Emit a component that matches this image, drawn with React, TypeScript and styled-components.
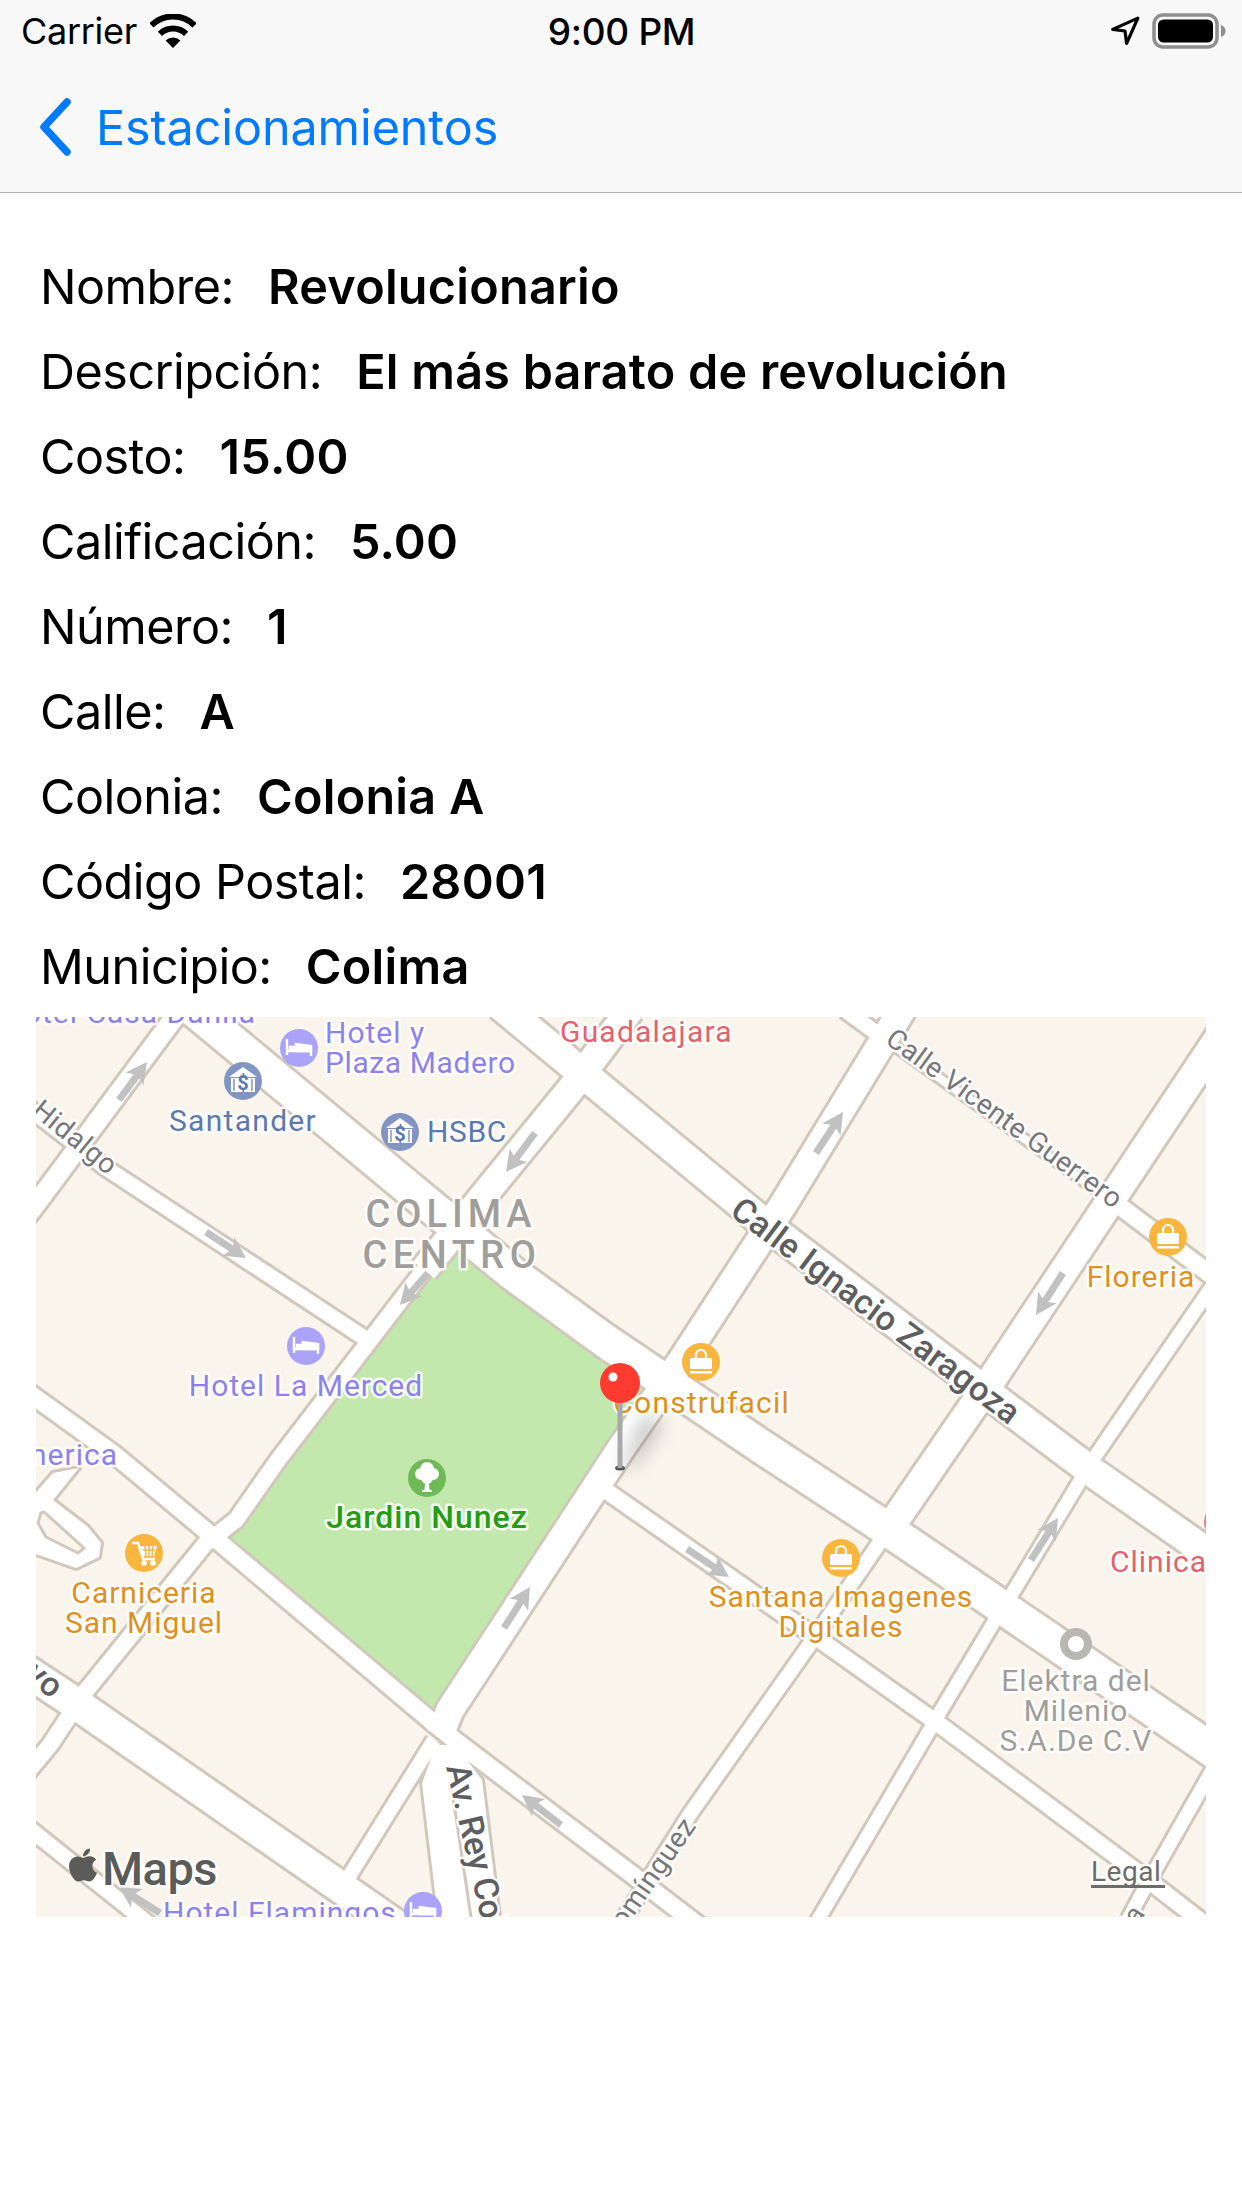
import * as React from 'react'
import styled, { createGlobalStyle } from 'styled-components'
import { FaApple } from 'react-icons/fa'

const GlobalStyle = createGlobalStyle`
  html, body {
    margin: 0;
    padding: 0;
    background: #ffffff;
    font-family: Inter, "Noto Sans", sans-serif;
  }
`

const Page = styled.div`
  width: 1242px;
  height: 2208px;
  background: #ffffff;
  overflow: hidden;
`

const Header = styled.header`
  background: #f8f8f8;
  border-bottom: 1px solid #b1b1b1;
  height: 192px;
`

const StatusBar = styled.div`
  height: 62px;
  display: grid;
  grid-template-columns: 1fr auto 1fr;
  align-items: center;
  padding: 0 16px 0 21px;
  font-size: 36px;
  color: #000000;
  letter-spacing: -0.3px;
`

const StatusLeft = styled.div`
  display: flex;
  align-items: center;
  gap: 13px;
`

const StatusRight = styled.div`
  display: flex;
  justify-content: flex-end;
  align-items: center;
  gap: 12px;
`

const Time = styled.span`
  font-weight: 500;
  font-size: 37px;
  margin-right: 4px;
`

const NavBar = styled.nav`
  height: 130px;
  display: flex;
  align-items: center;
  padding-left: 40px;
  gap: 25px;
  box-sizing: border-box;
  color: #007aff;
  font-size: 48.5px;
  letter-spacing: -0.1px;
`

const Details = styled.section`
  padding: 51px 36px 0;
`

const Row = styled.div`
  height: 85px;
  display: flex;
  align-items: center;
  gap: 34px;
  padding-left: 4px;
  font-size: 48.5px;
  letter-spacing: -0.5px;
  color: #000000;
`

const Value = styled.span`
  font-weight: 600;
  letter-spacing: 0.25px;
`

const MapFrame = styled.div`
  margin: 8px 36px 0;
  height: 900px;
  overflow: hidden;

  svg {
    display: block;
  }
`

const MapText = styled.text<{ $color: string; $size: number; $weight?: number; $spacing?: number }>`
  font-family: Roboto, Inter, sans-serif;
  font-size: ${(p) => p.$size}px;
  font-weight: ${(p) => p.$weight ?? 400};
  letter-spacing: ${(p) => p.$spacing ?? 1}px;
  fill: ${(p) => p.$color};
  stroke: rgba(255, 255, 255, 0.85);
  stroke-width: 5px;
  stroke-linejoin: round;
  paint-order: stroke;
`

const BARE = '#f9f5ed'
const EDGE = '#d0c8bb'
const PURPLE = '#8d82ea'
const BANK = '#5d78ae'
const ORANGE = '#dc9120'
const RED = '#e0636f'
const GREY = '#a09e9a'
const STREET = '#77777a'
const STREET_BOLD = '#5e5e60'

const roads = [
  { w: 29, d: '500,1005 765,1224 990,1395 1095,1474 1215,1558' },
  { w: 33, d: '188,1005 423,1200 512,1273 604,1340 765,1449 884,1527 1215,1752' },
  { w: 15, d: '25,1105 106,1168 375,1345' },
  { w: 27, d: '905,1005 783,1205 680,1363 620,1450 450,1710 440,1735' },
  { w: 17, d: '25,1390 115,1455 205,1530 430,1720 457,1742 630,1873 715,1938' },
  { w: 31, d: '25,1670 78,1705 346,1891 395,1925' },
  { w: 15, d: '25,1825 150,1925' },
  { w: 15, d: '845,1010 886,1040' },
  { w: 8, d: '886,1040 1110,1200' },
  { w: 17, d: '1105,1195 1215,1278' },
  { w: 28, d: '1220,1036 994,1376 943,1450 880,1542' },
  { w: 14, d: '880,1542 810,1644 690,1814 620,1925' },
  { w: 13, d: '1215,1282 1096,1455 1080,1481 1010,1597 994,1622 940,1712 932,1726 815,1925' },
  { w: 13, d: '1215,1765 1141,1895 1125,1925' },
  { w: 16, d: '605,1490 827,1645 940,1725 1148,1880 1215,1932' },
  { w: 19, d: '180,1010 36,1204 25,1218' },
  { w: 27, d: '630,1010 570,1090 484,1195 424,1270' },
  { w: 16, d: '424,1270 278,1460 236,1520 205,1544 85,1692 50,1745 25,1775' },
  { w: 14, d: '434,1740 348,1878 335,1900' },
]

const wideAreas = [
  '436,1745 422,1783 439,1925 500,1925 482,1780 456,1745',
  '79,1468 53,1473 25,1505 25,1550 76,1568 99,1557 101,1543 88,1527 53,1500',
]

const arrows = [
  [119, 1100, 147, 1062],
  [206, 1232, 246, 1258],
  [535, 1133, 506, 1172],
  [428, 1273, 400, 1305],
  [816, 1153, 843, 1112],
  [1063, 1273, 1036, 1315],
  [504, 1628, 530, 1587],
  [561, 1825, 522, 1795],
  [160, 1913, 119, 1887],
  [687, 1549, 729, 1577],
  [1031, 1560, 1058, 1518],
]

type Kind = 'bed' | 'bank' | 'bag' | 'cart' | 'tree'

const pois: { x: number; y: number; kind: Kind }[] = [
  { x: 299, y: 1048, kind: 'bed' },
  { x: 243, y: 1081, kind: 'bank' },
  { x: 400, y: 1132, kind: 'bank' },
  { x: 306, y: 1346, kind: 'bed' },
  { x: 701, y: 1362, kind: 'bag' },
  { x: 1168, y: 1237, kind: 'bag' },
  { x: 427, y: 1478, kind: 'tree' },
  { x: 144, y: 1553, kind: 'cart' },
  { x: 841, y: 1558, kind: 'bag' },
  { x: 423, y: 1911, kind: 'bed' },
]

const poiFill: Record<Kind, string> = {
  bed: '#aaa3f7',
  bank: '#8295c2',
  bag: '#f8b63f',
  cart: '#f8b63f',
  tree: '#6fb956',
}

type Label = {
  t: string
  x: number
  y: number
  c: string
  s?: number
  a?: 'start' | 'middle' | 'end'
  w?: number
  ls?: number
  r?: number
}

const labels: Label[] = [
  { t: 'Hotel Casa Dahlia', x: 256, y: 1023, c: PURPLE, a: 'end' },
  { t: 'Hotel y', x: 325, y: 1043, c: PURPLE },
  { t: 'Plaza Madero', x: 325, y: 1073, c: PURPLE, ls: 0.6 },
  { t: 'Santander', x: 243, y: 1131, c: BANK, a: 'middle', ls: 1.3 },
  { t: 'HSBC', x: 427, y: 1142, c: BANK, ls: 0.6 },
  { t: 'Guadalajara', x: 560, y: 1042, c: RED, ls: 1.2 },
  { t: 'COLIMA', x: 451, y: 1227, c: GREY, a: 'middle', s: 38, ls: 5, w: 500 },
  { t: 'CENTRO', x: 452, y: 1268, c: GREY, a: 'middle', s: 38, ls: 5.5, w: 500 },
  { t: 'Hotel La Merced', x: 306, y: 1396, c: PURPLE, a: 'middle' },
  { t: 'Construfacil', x: 790, y: 1413, c: ORANGE, a: 'end', ls: 1.2 },
  { t: 'Floreria', x: 1141, y: 1287, c: ORANGE, a: 'middle' },
  { t: 'Clinica', x: 1110, y: 1572, c: RED },
  { t: 'Jardin Nunez', x: 427, y: 1528, c: '#259c12', a: 'middle', s: 32, w: 500 },
  { t: 'Carniceria', x: 144, y: 1603, c: ORANGE, a: 'middle' },
  { t: 'San Miguel', x: 144, y: 1633, c: ORANGE, a: 'middle' },
  { t: 'America', x: 118, y: 1465, c: PURPLE, a: 'end' },
  { t: 'Santana Imagenes', x: 841, y: 1607, c: ORANGE, a: 'middle' },
  { t: 'Digitales', x: 841, y: 1637, c: ORANGE, a: 'middle' },
  { t: 'Elektra del', x: 1076, y: 1691, c: GREY, a: 'middle' },
  { t: 'Milenio', x: 1076, y: 1721, c: GREY, a: 'middle' },
  { t: 'S.A.De C.V', x: 1076, y: 1751, c: GREY, a: 'middle' },
  { t: 'Hotel Flamingos', x: 163, y: 1923, c: PURPLE },
  { t: 'Hidalgo', x: 108, y: 1176, c: STREET, a: 'end', s: 28, ls: 0.5, r: 39 },
  { t: 'Calle Vicente Guerrero', x: 999, y: 1126, c: STREET, a: 'middle', s: 28, ls: 0.3, r: 36 },
  { t: 'Calle Ignacio Zaragoza', x: 869, y: 1320, c: STREET_BOLD, a: 'middle', s: 34, w: 500, ls: 0.2, r: 37 },
  { t: 'Av. Rey Colima', x: 446, y: 1767, c: STREET_BOLD, s: 34, w: 500, ls: -0.3, r: 77 },
  { t: 'Domínguez', x: 697, y: 1826, c: STREET, a: 'end', s: 28, ls: 0.5, r: -55 },
  { t: 'Nuevo', x: 52, y: 1700, c: STREET_BOLD, a: 'end', s: 34, w: 500, ls: 0.5, r: 39 },
  { t: 'Rueda', x: 1146, y: 1913, c: STREET, a: 'end', s: 28, ls: 0.5, r: -57 },
]

const rows = [
  ['Nombre:', 'Revolucionario'],
  ['Descripción:', 'El más barato de revolución'],
  ['Costo:', '15.00'],
  ['Calificación:', '5.00'],
  ['Número:', '1'],
  ['Calle:', 'A'],
  ['Colonia:', 'Colonia A'],
  ['Código Postal:', '28001'],
  ['Municipio:', 'Colima'],
]

const WifiIcon = () => (
  <svg width="46" height="34" viewBox="0 0 46 34">
    <path d="M1.4 11.4a30.5 30.5 0 0 1 43.2 0" fill="none" stroke="#000" strokeWidth="6" />
    <path d="M9.9 19.9a18.5 18.5 0 0 1 26.2 0" fill="none" stroke="#000" strokeWidth="6" />
    <path d="M23 34l-7.4-7.4a10.5 10.5 0 0 1 14.8 0z" fill="#000" />
  </svg>
)

const LocationIcon = () => (
  <svg width="30" height="30" viewBox="0 0 28 28">
    <path d="M26 2 2.5 12.5l11.5 1.500 1.500 11.500z" fill="none" stroke="#000" strokeWidth="3" strokeLinejoin="round" />
  </svg>
)

const BatteryIcon = () => (
  <svg width="74" height="36" viewBox="0 0 74 36">
    <rect x="2" y="2" width="63" height="32" rx="9" fill="none" stroke="#8e8e8e" strokeWidth="3.500" />
    <rect x="6" y="6.500" width="55" height="23" rx="5.500" fill="#000" />
    <path d="M69 12c3 1 4.500 3 4.500 6s-1.500 5-4.500 6z" fill="#8e8e8e" />
  </svg>
)

const BackChevron = () => (
  <svg width="31" height="58" viewBox="0 0 31 58">
    <path d="M27 4 4 29l23 25" fill="none" stroke="#007aff" strokeWidth="7.500" strokeLinecap="round" strokeLinejoin="round" />
  </svg>
)

const PoiGlyph = ({ kind }: { kind: Kind }) => {
  if (kind === 'bed') {
    return (
      <g fill="none" stroke="#fff" strokeWidth="2.400">
        <path d="M-12-9V7M-12 3H12V8M12 3V-2L-3-4V3" />
        <path d="M-9-1h4v3h-4z" fill="#fff" />
        <path d="M-3-3 12-1V3H-3z" fill="#fff" />
      </g>
    )
  }
  if (kind === 'bank') {
    return (
      <g>
        <path d="M-14-4 0-14 14-4z" fill="#fff" />
        <rect x="-12" y="-3" width="24" height="14" fill="#fff" />
        <path d="M-9-2V10M9-2V10" stroke="#8295c2" strokeWidth="1.500" />
        <text x="0" y="9" textAnchor="middle" fontFamily="Roboto, sans-serif" fontSize="20" fontWeight="700" fill="#5d78ae">$</text>
      </g>
    )
  }
  if (kind === 'bag') {
    return (
      <g fill="#fff">
        <path d="M-5-4v-3a5 5 0 0 1 10 0v3" fill="none" stroke="#fff" strokeWidth="2.200" />
        <rect x="-11" y="-4" width="22" height="11" rx="1.500" />
        <rect x="-11" y="9" width="22" height="2.500" />
      </g>
    )
  }
  if (kind === 'cart') {
    return (
      <g>
        <path d="M-12-10H-6L-1 6H11" fill="none" stroke="#fff" strokeWidth="2.400" />
        <path d="M-5-7H13L10 3H-2z" fill="#fff" />
        <path d="M-1-3H11M1-7 2 3M5-7V3M9-7 8 3" stroke="#f8b63f" strokeWidth="1.500" />
        <circle cx="0" cy="10" r="2.800" fill="#fff" />
        <circle cx="9" cy="10" r="2.800" fill="#fff" />
      </g>
    )
  }
  return (
    <g fill="#fff">
      <circle cx="-6" cy="-4" r="6" />
      <circle cx="6" cy="-4" r="6" />
      <circle cx="0" cy="-9" r="7" />
      <circle cx="0" cy="0" r="6" />
      <path d="M-1.500 0h3l1 12H-2.500z" />
      <rect x="-5" y="12" width="10" height="1.800" />
    </g>
  )
}

const Arrow = ({ from }: { from: number[] }) => {
  const [x1, y1, x2, y2] = from
  const len = Math.hypot(x2 - x1, y2 - y1)
  const angle = (Math.atan2(y2 - y1, x2 - x1) * 180) / Math.PI
  return (
    <g transform={`translate(${x1} ${y1}) rotate(${angle})`} fill="#c1c1c1">
      <rect x="0" y="-3.500" width={len - 12} height="7" />
      <path d={`M${len} 0 L${len - 21} -11 L${len - 16} 0 L${len - 21} 11z`} />
    </g>
  )
}

const CityMap = () => (
  <svg width="1170" height="900" viewBox="36 1017 1170 900">
    <defs>
      <filter id="pinShadow" x="-100%" y="-100%" width="300%" height="300%">
        <feGaussianBlur stdDeviation="10" />
      </filter>
    </defs>
    <rect x="36" y="1017" width="1170" height="900" fill={BARE} />
    <path d="M455 1245 655 1385 432 1715 225 1538z" fill="#c3e8ae" />

    {roads.map((r) => (
      <polyline key={r.d} points={r.d} fill="none" stroke={EDGE} strokeWidth={r.w + 6} strokeLinejoin="round" />
    ))}
    {wideAreas.map((d) => (
      <polygon key={d} points={d} fill={EDGE} stroke={EDGE} strokeWidth="6" strokeLinejoin="round" />
    ))}
    {roads.map((r) => (
      <polyline key={r.d} points={r.d} fill="none" stroke="#ffffff" strokeWidth={r.w} strokeLinejoin="round" />
    ))}
    {wideAreas.map((d) => (
      <polygon key={d} points={d} fill="#ffffff" />
    ))}
    <path d="M452 1790 471 1917" stroke={EDGE} strokeWidth="3" />
    <polygon points="41,1513 38,1523 46,1537 78,1553 84,1548 44,1512" fill={BARE} stroke={EDGE} strokeWidth="3" strokeLinejoin="round" />

    {arrows.map((a) => (
      <Arrow key={a.join()} from={a} />
    ))}

    {pois.map((p) => (
      <g key={`${p.x}-${p.y}`} transform={`translate(${p.x} ${p.y})`}>
        <circle r="19" fill={poiFill[p.kind]} />
        <PoiGlyph kind={p.kind} />
      </g>
    ))}
    <circle cx="1076" cy="1644" r="12" fill="#ffffff" stroke="#b9b7b2" strokeWidth="8" />
    <circle cx="1223" cy="1522" r="19" fill="#ec7f8b" />

    {labels.map((l) => (
      <MapText
        key={`${l.t}-${l.x}`}
        x={l.x}
        y={l.y}
        textAnchor={l.a ?? 'start'}
        transform={l.r ? `rotate(${l.r} ${l.x} ${l.y})` : undefined}
        $color={l.c}
        $size={l.s ?? 30}
        $weight={l.w}
        $spacing={l.ls}
      >
        {l.t}
      </MapText>
    ))}

    <MapText x="102" y="1885" $color="#5b5b59" $size={47} $weight={500} $spacing={-0.5}>Maps</MapText>
    <FaApple x="64" y="1846" size={38} color="#5b5b59" />
    <MapText x="1091" y="1881" $color="#6d6c6a" $size={28} $spacing={0.5}>Legal</MapText>
    <rect x="1091" y="1885" width="74" height="3" fill="#6d6c6a" />

    <path d="M622 1468 646 1416 662 1424 628 1470z" fill="#555555" opacity="0.45" filter="url(#pinShadow)" />
    <ellipse cx="620" cy="1468" rx="5" ry="2.500" fill="#555555" />
    <rect x="617.500" y="1400" width="5" height="68" fill="#a9a9a9" />
    <circle cx="620" cy="1383" r="20" fill="#ff3b30" />
    <circle cx="613" cy="1377" r="4.500" fill="#ffffff" />
  </svg>
)

export default function App() {
  return (
    <Page>
      <GlobalStyle />
      <Header>
        <StatusBar>
          <StatusLeft>
            <span>Carrier</span>
            <WifiIcon />
          </StatusLeft>
          <Time>9:00 PM</Time>
          <StatusRight>
            <LocationIcon />
            <BatteryIcon />
          </StatusRight>
        </StatusBar>
        <NavBar>
          <BackChevron />
          <span>Estacionamientos</span>
        </NavBar>
      </Header>
      <Details>
        {rows.map(([label, value]) => (
          <Row key={label}>
            <span>{label}</span>
            <Value>{value}</Value>
          </Row>
        ))}
      </Details>
      <MapFrame>
        <CityMap />
      </MapFrame>
    </Page>
  )
}
